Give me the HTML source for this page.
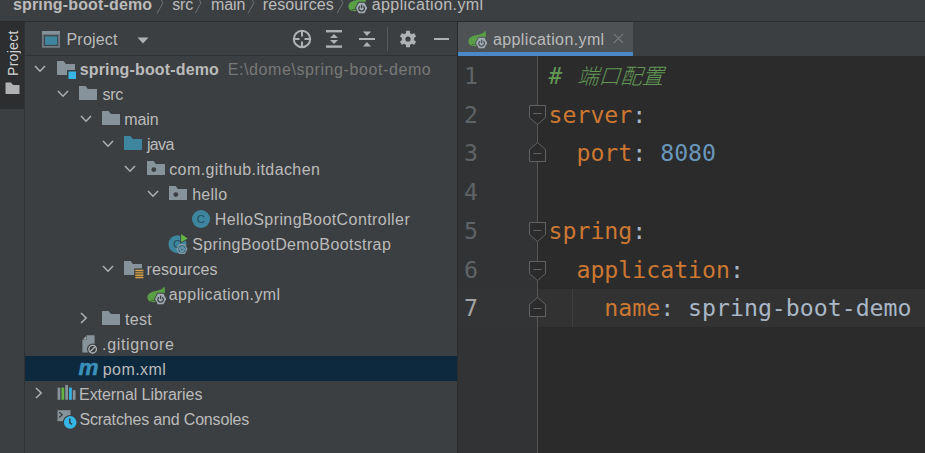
<!DOCTYPE html>
<html><head><meta charset="utf-8">
<style>
html,body{margin:0;padding:0;}
body{width:925px;height:453px;overflow:hidden;background:#3c3f41;position:relative;font-family:"Liberation Sans","Noto Sans CJK SC",sans-serif;font-size:16px;color:#bbbbbb;letter-spacing:0.38px;}
.abs{position:absolute;}
#crumbs{left:0;top:0;width:925px;height:21px;background:#3c3f41;border-bottom:1px solid #2b2b2b;}
#crumbs span{position:absolute;top:-8.4px;line-height:25px;white-space:pre;}
#stripe{left:0;top:22px;width:24px;height:431px;background:#3c3f41;border-right:1px solid #2f3133;}
#stripebtn{left:0;top:22px;width:24px;height:87px;background:#2c2e2f;}
#ptxt{left:5px;top:8px;width:16px;height:46px;writing-mode:vertical-rl;transform:rotate(180deg);font-size:14px;letter-spacing:0.3px;color:#d4d4d4;white-space:pre;line-height:16px;}
#phead{left:25px;top:22px;width:432px;height:33px;border-bottom:1px solid #2f3133;}
#tree{left:25px;top:56px;width:432px;height:397px;}
.row{position:absolute;left:0;width:432px;height:25px;}
.row .t{position:absolute;top:1px;line-height:25px;white-space:pre;padding-top:0px;}
.row svg{position:absolute;}
.sel{background:#0d293e;}
.gray{color:#787878;}
#vsplit{left:457px;top:22px;width:1px;height:431px;background:#2b2b2b;}
#tabbar{left:458px;top:22px;width:467px;height:34px;background:#3c3f41;}
#tab{left:0;top:0;width:175px;height:30px;background:#4e5254;border-bottom:4px solid #4a88c7;}
#editor{left:458px;top:56px;width:467px;height:397px;background:#2b2b2b;}
#gutter{left:0;top:0;width:79px;height:397px;background:#313335;border-right:1px solid #555555;}
.ln{position:absolute;left:6px;font-family:"DejaVu Sans Mono","Liberation Mono",monospace;font-size:23.2px;letter-spacing:0;color:#606366;line-height:38.7px;height:38.7px;margin-top:1px;}
.cl{position:absolute;left:90.5px;font-family:"DejaVu Sans Mono","Liberation Mono","Noto Sans CJK SC",monospace;font-size:23.2px;letter-spacing:0;line-height:38.7px;height:38.7px;white-space:pre;color:#a9b7c6;margin-top:1px;}
.cj{display:inline-block;font-family:"Liberation Sans","Noto Sans CJK SC",sans-serif;font-style:normal;font-weight:300;font-size:21.6px;transform:skewX(-18deg);line-height:30px;margin-left:2.5px;vertical-align:baseline;}
.k{color:#cc7832;}
.n{color:#6897bb;}
.c{color:#629755;font-style:italic;}
</style></head><body>
<div id="crumbs" class="abs">
<span style="left:13.00px;font-weight:bold;letter-spacing:0.149px">spring-boot-demo</span>
<span style="left:172.30px;letter-spacing:-0.240px">src</span>
<span style="left:210.90px;letter-spacing:-0.053px">main</span>
<span style="left:262.80px;letter-spacing:0.100px">resources</span>
<span style="left:371.80px;letter-spacing:0.389px">application.yml</span>
<svg class="abs" style="left:0;top:0" width="925" height="21" fill="none" stroke="#6e7173" stroke-width="1"><path d="M157.2 -7.6 L162.9 2.8 L157.2 13.2"/><path d="M195.3 -7.6 L201.0 2.8 L195.3 13.2"/><path d="M248.2 -7.6 L253.9 2.8 L248.2 13.2"/><path d="M337.2 -7.6 L342.9 2.8 L337.2 13.2"/></svg>
<svg class="abs" style="left:348.2px;top:-6.3px" width="21" height="20" viewBox="0 0 21 20"><path d="M17.2 1.5 C15.5 4.5 12 5.5 8 6.2 C3.5 7 0.4 9 0.4 12.3 C0.4 15.5 3 17.2 6.5 17.2 C9 17.2 12 16 14 14 C17.5 11 19 6 17.2 1.5Z" fill="#589f46"/><path d="M3.8 15.6 C6 15.9 8 15.4 9.5 14.6" fill="none" stroke="#3c3f41" stroke-width="0.7"/><path d="M7.00 14.00 L10.30 7.70 L16.90 7.70 L20.20 14.00 L16.90 20.30 L10.30 20.30Z" fill="#3c3f41"/><path d="M7.95 14.00 L10.77 8.70 L16.43 8.70 L19.25 14.00 L16.43 19.30 L10.77 19.30Z" fill="#a0abb4"/><path d="M11.92 12.16 A2.8 2.8 0 1 0 15.28 12.16" fill="none" stroke="#3c3f41" stroke-width="1.3"/><path d="M13.6 10.70 V14.20" stroke="#3c3f41" stroke-width="1.3"/></svg>
</div>

<div id="stripe" class="abs"></div>
<div id="stripebtn" class="abs"><div id="ptxt" class="abs">Project</div>
<svg class="abs" style="left:5px;top:60px" width="15" height="13" viewBox="0 0 15 13"><path d="M0.5 0.5 H6 L8 3 H14.5 V12 H0.5Z" fill="#afb1b3"/></svg>
</div>

<div id="phead" class="abs">
<svg class="abs" style="left:17px;top:9.2px" width="18" height="17" viewBox="0 0 18 17"><rect x="0" y="0" width="18" height="16.8" fill="#707b83"/><rect x="0" y="0" width="18" height="2.8" fill="#87939a"/><rect x="1.8" y="4.1" width="14.4" height="10.9" fill="#3f4548"/><rect x="3" y="5.4" width="12.2" height="8.4" fill="#3e86a0"/></svg>
<span class="abs" style="left:41.5px;top:5px;line-height:25px;letter-spacing:0.2px">Project</span>
<svg class="abs" style="left:112px;top:15.3px" width="12" height="8" viewBox="0 0 12 8"><path d="M0.5 0.5 H11.5 L6 6.5Z" fill="#afb1b3"/></svg>
<svg class="abs" style="left:266px;top:6px" width="22" height="22" viewBox="0 0 22 22" fill="none" stroke="#afb1b3" stroke-width="2"><circle cx="11" cy="11" r="8.2"/><path d="M11 2.5V8.5M11 13.5V19.5M2.5 11H8.5M13.5 11H19.5"/></svg>
<svg class="abs" style="left:300px;top:7px" width="18" height="20" viewBox="0 0 18 20" fill="#afb1b3"><rect x="1" y="1" width="16" height="2.4"/><rect x="1" y="16.4" width="16" height="2.4"/><path d="M9 5 L13 9 H5Z"/><path d="M9 15 L13 11 H5Z"/></svg>
<svg class="abs" style="left:333px;top:8px" width="18" height="18" viewBox="0 0 18 18" fill="#afb1b3"><rect x="1" y="8" width="16" height="2"/><path d="M9 6 L13 1.5 H5Z"/><path d="M9 12 L13 16.5 H5Z"/></svg>
<div class="abs" style="left:362px;top:5px;width:1px;height:24px;background:#555759"></div>
<svg class="abs" style="left:374px;top:8px" width="18" height="18" viewBox="0 0 18 18"><g fill="#afb1b3"><circle cx="9" cy="9" r="6.2"/><g><rect x="7" y="0.7" width="4" height="16.6" rx="0.5"/><rect x="7" y="0.7" width="4" height="16.6" rx="0.5" transform="rotate(60 9 9)"/><rect x="7" y="0.7" width="4" height="16.6" rx="0.5" transform="rotate(120 9 9)"/></g></g><circle cx="9" cy="9" r="2.6" fill="#3c3f41"/></svg>
<div class="abs" style="left:408.5px;top:15.6px;width:15px;height:2.6px;background:#afb1b3"></div>
</div>

<div id="tree" class="abs">
<div class="row " style="top:0px"><svg width="12" height="8" viewBox="0 0 12 8" style="left:9px;top:9px"><path d="M1 1 L6 6.2 L11 1" fill="none" stroke="#afb1b3" stroke-width="1.5"/></svg><svg width="20" height="19" viewBox="0 0 20 19" style="left:31.5px;top:5px"><path d="M0 0 H6.6 L8.8 3 H18 V14 H0Z" fill="#87939a"/><rect x="10" y="9" width="10" height="10" fill="#3c3f41"/><rect x="11.5" y="10.5" width="7.5" height="7.5" fill="#35b6e6"/></svg><span class="t" style="left:54.76px;font-weight:bold;letter-spacing:0.149px">spring-boot-demo</span><span class="t gray" style="left:202.68px;letter-spacing:0.591px">E:\dome\spring-boot-demo</span></div>
<div class="row " style="top:25px"><svg width="12" height="8" viewBox="0 0 12 8" style="left:32px;top:9px"><path d="M1 1 L6 6.2 L11 1" fill="none" stroke="#afb1b3" stroke-width="1.5"/></svg><svg width="18" height="14" viewBox="0 0 18 14" style="left:54px;top:5.3px"><path d="M0 0 H6.6 L8.8 3 H18 V14 H0Z" fill="#87939a"/></svg><span class="t" style="left:77.48px;letter-spacing:-0.240px">src</span></div>
<div class="row " style="top:50px"><svg width="12" height="8" viewBox="0 0 12 8" style="left:54.5px;top:9px"><path d="M1 1 L6 6.2 L11 1" fill="none" stroke="#afb1b3" stroke-width="1.5"/></svg><svg width="18" height="14" viewBox="0 0 18 14" style="left:76.5px;top:5.3px"><path d="M0 0 H6.6 L8.8 3 H18 V14 H0Z" fill="#87939a"/></svg><span class="t" style="left:99.24px;letter-spacing:-0.053px">main</span></div>
<div class="row " style="top:75px"><svg width="12" height="8" viewBox="0 0 12 8" style="left:77px;top:9px"><path d="M1 1 L6 6.2 L11 1" fill="none" stroke="#afb1b3" stroke-width="1.5"/></svg><svg width="18" height="14" viewBox="0 0 18 14" style="left:99px;top:5.3px"><path d="M0 0 H6.6 L8.8 3 H18 V14 H0Z" fill="#3e86a0"/></svg><span class="t" style="left:121.90px;letter-spacing:-0.610px">java</span></div>
<div class="row " style="top:100px"><svg width="12" height="8" viewBox="0 0 12 8" style="left:99px;top:9px"><path d="M1 1 L6 6.2 L11 1" fill="none" stroke="#afb1b3" stroke-width="1.5"/></svg><svg width="18" height="14" viewBox="0 0 18 14" style="left:122px;top:5.3px"><path d="M0 0 H6.6 L8.8 3 H18 V14 H0Z" fill="#87939a"/><circle cx="6.8" cy="8.6" r="2.4" fill="#3c3f41"/></svg><span class="t" style="left:144.18px;letter-spacing:0.418px">com.github.itdachen</span></div>
<div class="row " style="top:125px"><svg width="12" height="8" viewBox="0 0 12 8" style="left:121.5px;top:9px"><path d="M1 1 L6 6.2 L11 1" fill="none" stroke="#afb1b3" stroke-width="1.5"/></svg><svg width="18" height="14" viewBox="0 0 18 14" style="left:143.5px;top:5.3px"><path d="M0 0 H6.6 L8.8 3 H18 V14 H0Z" fill="#87939a"/><circle cx="6.8" cy="8.6" r="2.4" fill="#3c3f41"/></svg><span class="t" style="left:167.18px;letter-spacing:0.280px">hello</span></div>
<div class="row " style="top:150px"><svg width="18" height="18" viewBox="0 0 18 18" style="left:167px;top:4px"><circle cx="9" cy="9" r="9" fill="#3e86a0"/><text x="8.9" y="13" font-size="11.6" text-anchor="middle" font-family="Liberation Sans, sans-serif" letter-spacing="0" fill="#264a5a">C</text></svg><span class="t" style="left:189.68px;letter-spacing:0.420px">HelloSpringBootController</span></div>
<div class="row " style="top:175px"><svg width="21" height="22" viewBox="0 0 21 22" style="left:142.8px;top:3px"><circle cx="9.5" cy="10.2" r="9" fill="#3e86a0"/><text x="9.2" y="13.8" font-size="11.6" text-anchor="middle" font-family="Liberation Sans, sans-serif" letter-spacing="0" fill="#264a5a">C</text><path d="M12.3 -0.8 L21 4.4 L12.3 9.4Z" fill="#3c3f41"/><path d="M13.1 0 L19.7 4.4 L13.1 8.3Z" fill="#62b543"/><path d="M8.35 14.90 L11.18 9.90 L16.82 9.90 L19.65 14.90 L16.82 19.90 L11.18 19.90Z" fill="#8c98a1"/><circle cx="14" cy="14.9" r="3.9" fill="#3a7792"/><path d="M12.68 13.44 A2.2 2.2 0 1 0 15.32 13.44" fill="none" stroke="#9eaab2" stroke-width="0.9"/><path d="M14 12.10 V15.00" stroke="#9eaab2" stroke-width="0.9"/></svg><span class="t" style="left:167.30px;letter-spacing:0.371px">SpringBootDemoBootstrap</span></div>
<div class="row " style="top:200px"><svg width="12" height="8" viewBox="0 0 12 8" style="left:77px;top:9px"><path d="M1 1 L6 6.2 L11 1" fill="none" stroke="#afb1b3" stroke-width="1.5"/></svg><svg width="20" height="19" viewBox="0 0 20 19" style="left:99px;top:5.3px"><path d="M0 0 H6.6 L8.8 3 H18 V14 H0Z" fill="#87939a"/><rect x="10.2" y="7.4" width="10" height="12" fill="#3c3f41"/><path d="M11.3 9.5H19.4M11.3 11.85H19.4M11.3 14.2H19.4M11.3 16.55H19.4" stroke="#d9a343" stroke-width="1.45"/></svg><span class="t" style="left:121.56px;letter-spacing:0.100px">resources</span></div>
<div class="row " style="top:225px"><svg width="21" height="21" viewBox="0 0 21 21" style="left:121.5px;top:4px"><path d="M17.2 1.5 C15.5 4.5 12 5.5 8 6.2 C3.5 7 0.4 9 0.4 12.3 C0.4 15.5 3 17.2 6.5 17.2 C9 17.2 12 16 14 14 C17.5 11 19 6 17.2 1.5Z" fill="#589f46"/><path d="M3.8 15.6 C6 15.9 8 15.4 9.5 14.6" fill="none" stroke="#3c3f41" stroke-width="0.7"/><path d="M7.00 14.00 L10.30 7.70 L16.90 7.70 L20.20 14.00 L16.90 20.30 L10.30 20.30Z" fill="#3c3f41"/><path d="M7.95 14.00 L10.77 8.70 L16.43 8.70 L19.25 14.00 L16.43 19.30 L10.77 19.30Z" fill="#a0abb4"/><path d="M11.92 12.16 A2.8 2.8 0 1 0 15.28 12.16" fill="none" stroke="#3c3f41" stroke-width="1.3"/><path d="M13.6 10.70 V14.20" stroke="#3c3f41" stroke-width="1.3"/></svg><span class="t" style="left:143.80px;letter-spacing:0.389px">application.yml</span></div>
<div class="row " style="top:250px"><svg width="8" height="12" viewBox="0 0 8 12" style="left:55.2px;top:6px"><path d="M1 1 L6.2 6 L1 11" fill="none" stroke="#afb1b3" stroke-width="1.5"/></svg><svg width="18" height="14" viewBox="0 0 18 14" style="left:76.5px;top:5.3px"><path d="M0 0 H6.6 L8.8 3 H18 V14 H0Z" fill="#87939a"/></svg><span class="t" style="left:100.10px;letter-spacing:0.267px">test</span></div>
<div class="row " style="top:275px"><svg width="18" height="22" viewBox="0 0 18 22" style="left:56.5px;top:4px"><path d="M4.8 0.2 H12.6 V17.5 H0.4 V4.8Z" fill="#87939a"/><path d="M0.4 4.8 L4.8 0.2 V4.8Z" fill="#3c3f41"/><path d="M1.2 4.4 L4.4 1.1 V4.4Z" fill="#a7b0b6"/><circle cx="10.6" cy="14.2" r="5.6" fill="#3c3f41"/><circle cx="10.6" cy="14.2" r="3.8" fill="none" stroke="#b2b4b6" stroke-width="1.3"/><path d="M8 16.8 L13.2 11.6" stroke="#b2b4b6" stroke-width="1.3"/></svg><span class="t" style="left:77.12px;letter-spacing:0.658px">.gitignore</span></div>
<div class="row sel" style="top:300px"><span class="t" style="left:53.6px;top:-1px;font:italic bold 22.5px 'Liberation Sans',sans-serif;line-height:25px;color:#3a91bb;letter-spacing:0;-webkit-text-stroke:0.5px #3a91bb">m</span><span class="t" style="left:77.74px;letter-spacing:0.427px">pom.xml</span></div>
<div class="row " style="top:325px"><svg width="8" height="12" viewBox="0 0 8 12" style="left:10.2px;top:6px"><path d="M1 1 L6.2 6 L1 11" fill="none" stroke="#afb1b3" stroke-width="1.5"/></svg><svg width="19" height="15" viewBox="0 0 19 15" style="left:31.5px;top:4.2px"><rect x="0.6" y="2.6" width="2.7" height="12.2" fill="#87939a"/><rect x="4.5" y="2.6" width="2.7" height="12.2" fill="#62b543"/><rect x="8.3" y="0" width="2.7" height="14.8" fill="#87939a"/><rect x="12.1" y="2.6" width="2.7" height="12.2" fill="#35b6e6"/><rect x="15.8" y="5.2" width="2.7" height="9.6" fill="#87939a"/></svg><span class="t" style="left:54.06px;letter-spacing:-0.066px">External Libraries</span></div>
<div class="row " style="top:350px"><svg width="20" height="20" viewBox="0 0 20 20" style="left:31.5px;top:4px"><path d="M0.5 0.2 H13.5 V11.2 H0.5Z" fill="#87939a"/><path d="M2.2 2.2 L5.2 4.8 L2.2 7.4" fill="none" stroke="#3c3f41" stroke-width="1.3"/><circle cx="13.2" cy="12.4" r="7.4" fill="#3c3f41"/><circle cx="13.2" cy="12.4" r="6.3" fill="#35b6e6"/><path d="M12.8 8.6 V12.8 L15.2 14.4" fill="none" stroke="#3c3f41" stroke-width="1.5"/></svg><span class="t" style="left:54.38px;letter-spacing:-0.168px">Scratches and Consoles</span></div>
</div>

<div id="vsplit" class="abs"></div>
<div id="tabbar" class="abs"><div id="tab" class="abs">
<!--TABICON--><svg class="abs" style="left:10.2px;top:7.4px" width="21" height="20" viewBox="0 0 21 20"><path d="M17.2 1.5 C15.5 4.5 12 5.5 8 6.2 C3.5 7 0.4 9 0.4 12.3 C0.4 15.5 3 17.2 6.5 17.2 C9 17.2 12 16 14 14 C17.5 11 19 6 17.2 1.5Z" fill="#589f46"/><path d="M3.8 15.6 C6 15.9 8 15.4 9.5 14.6" fill="none" stroke="#4e5254" stroke-width="0.7"/><path d="M7.00 14.00 L10.30 7.70 L16.90 7.70 L20.20 14.00 L16.90 20.30 L10.30 20.30Z" fill="#4e5254"/><path d="M7.95 14.00 L10.77 8.70 L16.43 8.70 L19.25 14.00 L16.43 19.30 L10.77 19.30Z" fill="#a0abb4"/><path d="M11.92 12.16 A2.8 2.8 0 1 0 15.28 12.16" fill="none" stroke="#4e5254" stroke-width="1.3"/><path d="M13.6 10.70 V14.20" stroke="#4e5254" stroke-width="1.3"/></svg><!--/TABICON-->
<span class="abs" style="left:35px;top:5px;line-height:25px;white-space:pre">application.yml</span>
<svg class="abs" style="left:154.6px;top:11.4px" width="11" height="11" viewBox="0 0 11 11" stroke="#777b7d" stroke-width="1.1" fill="none"><path d="M0.8 0.8 L10 10 M10 0.8 L0.8 10"/></svg>
</div></div>

<div id="editor" class="abs">
<div id="gutter" class="abs"></div>
<div class="abs" style="left:0;top:232.6px;width:79px;height:38.2px;background:#323436"></div>
<div class="abs" style="left:80px;top:232.6px;width:387px;height:38.2px;background:#323232"></div>
<div class="abs" style="left:114px;top:232.6px;width:1px;height:38.2px;background:#3f3f3f"></div>
<div class="ln" style="top:0.0px;color:#606366">1</div>
<div class="cl" style="top:0.0px"><span class="c"># <span class="cj">端口配置</span></span></div>
<div class="ln" style="top:38.7px;color:#606366">2</div>
<div class="cl" style="top:38.7px"><span class="k">server</span>:</div>
<div class="ln" style="top:77.4px;color:#606366">3</div>
<div class="cl" style="top:77.4px">  <span class="k">port</span>: <span class="n">8080</span></div>
<div class="ln" style="top:116.1px;color:#606366">4</div>
<div class="cl" style="top:116.1px"></div>
<div class="ln" style="top:154.8px;color:#606366">5</div>
<div class="cl" style="top:154.8px"><span class="k">spring</span>:</div>
<div class="ln" style="top:193.5px;color:#606366">6</div>
<div class="cl" style="top:193.5px">  <span class="k">application</span>:</div>
<div class="ln" style="top:232.2px;color:#a4a3a3">7</div>
<div class="cl" style="top:232.2px">    <span class="k">name</span>: spring-boot-demo</div>
<svg class="abs" style="left:71px;top:49.4px" width="17" height="20" viewBox="0 0 17 20"><path d="M0.5 0.5 H16.5 V12.5 L8.5 19.5 L0.5 12.5Z" fill="#2b2b2b" stroke="#606366" stroke-width="1"/><path d="M4.3 8.5H12.7" stroke="#606366" stroke-width="1"/></svg>
<svg class="abs" style="left:71px;top:85.7px" width="17" height="20" viewBox="0 0 17 20"><path d="M0.5 19.5 H16.5 V7.5 L8.5 0.5 L0.5 7.5Z" fill="#2b2b2b" stroke="#606366" stroke-width="1"/><path d="M4.3 11.5H12.7" stroke="#606366" stroke-width="1"/></svg>
<svg class="abs" style="left:71px;top:165.7px" width="17" height="20" viewBox="0 0 17 20"><path d="M0.5 0.5 H16.5 V12.5 L8.5 19.5 L0.5 12.5Z" fill="#2b2b2b" stroke="#606366" stroke-width="1"/><path d="M4.3 8.5H12.7" stroke="#606366" stroke-width="1"/></svg>
<svg class="abs" style="left:71px;top:204.7px" width="17" height="20" viewBox="0 0 17 20"><path d="M0.5 0.5 H16.5 V12.5 L8.5 19.5 L0.5 12.5Z" fill="#2b2b2b" stroke="#606366" stroke-width="1"/><path d="M4.3 8.5H12.7" stroke="#606366" stroke-width="1"/></svg>
<svg class="abs" style="left:71px;top:241.3px" width="17" height="20" viewBox="0 0 17 20"><path d="M0.5 19.5 H16.5 V7.5 L8.5 0.5 L0.5 7.5Z" fill="#2b2b2b" stroke="#606366" stroke-width="1"/><path d="M4.3 11.5H12.7" stroke="#606366" stroke-width="1"/></svg>
</div>
</body></html>
